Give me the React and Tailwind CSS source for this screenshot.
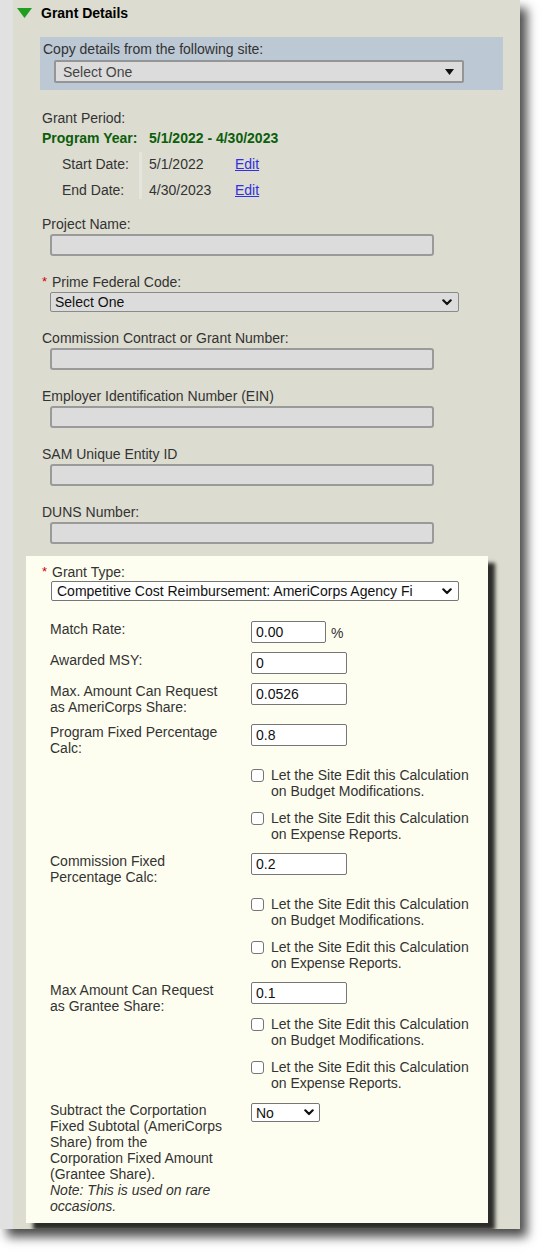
import React from "react";

const Chevron = () => (
  <svg width="10" height="7" viewBox="0 0 10 7" className="shrink-0">
    <path d="M1.3 1.3 L5 5 L8.7 1.3" fill="none" stroke="#111" strokeWidth="2.2" strokeLinecap="round" strokeLinejoin="round" />
  </svg>
);

const Req = () => <span className="inline-block w-[10px] text-[#d40000] text-[13px] leading-[16px]">*</span>;

function GrayInput() {
  return <div className="ml-[37px] mt-[2px] w-[384px] h-[22px] bg-[#dcdcdc] border-2 border-[#9a9a9a] rounded-[3px]" />;
}

function BeigeField({ label }) {
  return (
    <div className="mt-[18px]">
      <div className="pl-[29px] h-[16px] whitespace-nowrap">{label}</div>
      <GrayInput />
    </div>
  );
}

function TextBox({ value, w = "w-[96px]" }) {
  return (
    <div className={`${w} h-[22px] bg-white border border-[#767676] rounded-[2px] pl-[4px] flex items-center text-[#111] shrink-0`}>
      {value}
    </div>
  );
}

function Row({ mt, label, children }) {
  return (
    <div className={`flex ${mt}`}>
      <div className="w-[225px] pl-[24px] shrink-0 whitespace-nowrap">{label}</div>
      <div className="flex items-start">{children}</div>
    </div>
  );
}

function CheckRow({ mt, second }) {
  return (
    <div className={`flex ${mt} pl-[225px]`}>
      <div className="w-[13px] h-[13px] mt-[2px] border border-[#767676] rounded-[3px] bg-white shrink-0" />
      <div className="ml-[7px] whitespace-nowrap">
        Let the Site Edit this Calculation
        <br />
        {second}
      </div>
    </div>
  );
}

export default function App() {
  return (
    <div className="w-[543px] h-[1254px] bg-white overflow-hidden font-['Liberation_Sans',Arial,sans-serif] text-[14px] leading-[16px] text-[#333]">
      <div className="w-[520px] h-[1229px] bg-[#dcdcd0] border-l-[13px] border-[#e1e1e1] overflow-hidden shadow-[7px_8px_10px_rgba(0,0,0,0.7)]">
        {/* Header */}
        <div className="h-[26px] flex items-center">
          <svg width="15" height="10" viewBox="0 0 15 10" className="ml-[4px]">
            <polygon points="0,0 15,0 7.5,10" fill="#1f9e1f" />
          </svg>
          <span className="ml-[9px] font-bold text-black">Grant Details</span>
        </div>

        {/* Copy details box */}
        <div className="ml-[27px] mt-[11px] w-[463px] h-[53px] bg-[#bcc8d3] pt-[4px] pl-[3px]">
          <div className="h-[16px]">Copy details from the following site:</div>
          <div className="ml-[11px] mt-[3px] w-[410px] h-[23px] bg-[#dcdcdc] border-2 border-[#959595] rounded-[2px] flex items-center justify-between pl-[7px] pr-[8px] text-[#444]">
            <span>Select One</span>
            <svg width="9" height="6" viewBox="0 0 9 6">
              <polygon points="0,0 9,0 4.5,6" fill="#111" />
            </svg>
          </div>
        </div>

        {/* Grant period */}
        <div className="pl-[29px] mt-[20px] h-[16px]">Grant Period:</div>
        <div className="pl-[29px] mt-[4px] h-[16px] font-bold text-[#0b5e0b] flex">
          <span className="w-[107px]">Program Year:</span>
          <span>5/1/2022 - 4/30/2023</span>
        </div>
        <div className="flex mt-[5px]">
          <div className="pl-[49px] w-[126px]">
            <div className="h-[26px] flex items-center">Start Date:</div>
            <div className="h-[26px] flex items-center">End Date:</div>
          </div>
          <div className="w-[3px] mt-[1px] h-[47px] bg-[#e5e5dd]" />
          <div className="w-[93px] pl-[7px]">
            <div className="h-[26px] flex items-center">5/1/2022</div>
            <div className="h-[26px] flex items-center">4/30/2023</div>
          </div>
          <div>
            <div className="h-[26px] flex items-center text-[#3030e0] underline">Edit</div>
            <div className="h-[26px] flex items-center text-[#3030e0] underline">Edit</div>
          </div>
        </div>

        {/* Fields */}
        <div className="mt-[13px]">
          <div className="pl-[29px] h-[16px]">Project Name:</div>
          <GrayInput />
        </div>
        <div className="mt-[18px]">
          <div className="pl-[29px] h-[16px] flex">
            <Req />
            <span>Prime Federal Code:</span>
          </div>
          <div className="ml-[37px] mt-[2px] w-[409px] h-[20px] bg-[#dcdcdc] border-[1.5px] border-[#8a8a8a] rounded-[2px] flex items-center justify-between pl-[4px] pr-[6px] text-[#111]">
            <span>Select One</span>
            <Chevron />
          </div>
        </div>
        <BeigeField label="Commission Contract or Grant Number:" />
        <BeigeField label="Employer Identification Number (EIN)" />
        <BeigeField label="SAM Unique Entity ID" />
        <BeigeField label="DUNS Number:" />

        {/* Cream box */}
        <div className="ml-[13px] mt-[12px] w-[462px] bg-[#fefef0] pt-[8px] pb-[9px] shadow-[7px_7px_4px_rgba(0,0,0,0.8)]">
          <div className="pl-[16px] h-[16px] flex">
            <Req />
            <span>Grant Type:</span>
          </div>
          <div className="ml-[25px] mt-[1px] w-[408px] h-[20px] bg-white border border-[#767676] rounded-[2px] flex items-center justify-between pl-[5px] pr-[6px] text-[#111]">
            <span className="whitespace-nowrap">Competitive Cost Reimbursement: AmeriCorps Agency Fi</span>
            <Chevron />
          </div>

          <Row mt="mt-[20px]" label="Match Rate:">
            <TextBox value="0.00" w="w-[75px]" />
            <span className="ml-[5px] mt-[4px]">%</span>
          </Row>
          <Row mt="mt-[9px]" label="Awarded MSY:">
            <TextBox value="0" />
          </Row>
          <Row mt="mt-[9px]" label={<>Max. Amount Can Request<br />as AmeriCorps Share:</>}>
            <TextBox value="0.0526" />
          </Row>
          <Row mt="mt-[9px]" label={<>Program Fixed Percentage<br />Calc:</>}>
            <TextBox value="0.8" />
          </Row>
          <CheckRow mt="mt-[11px]" second="on Budget Modifications." />
          <CheckRow mt="mt-[11px]" second="on Expense Reports." />
          <Row mt="mt-[11px]" label={<>Commission Fixed<br />Percentage Calc:</>}>
            <TextBox value="0.2" />
          </Row>
          <CheckRow mt="mt-[11px]" second="on Budget Modifications." />
          <CheckRow mt="mt-[11px]" second="on Expense Reports." />
          <Row mt="mt-[11px]" label={<>Max Amount Can Request<br />as Grantee Share:</>}>
            <TextBox value="0.1" />
          </Row>
          <CheckRow mt="mt-[2px]" second="on Budget Modifications." />
          <CheckRow mt="mt-[11px]" second="on Expense Reports." />
          <Row
            mt="mt-[11px]"
            label={
              <>
                Subtract the Corportation
                <br />
                Fixed Subtotal (AmeriCorps
                <br />
                Share) from the
                <br />
                Corporation Fixed Amount
                <br />
                (Grantee Share).
                <br />
                <i>
                  Note: This is used on rare
                  <br />
                  occasions.
                </i>
              </>
            }
          >
            <div className="mt-[1px] w-[69px] h-[19px] bg-white border border-[#767676] rounded-[2px] flex items-center justify-between pl-[4px] pr-[5px] text-[#111]">
              <span>No</span>
              <Chevron />
            </div>
          </Row>
        </div>
      </div>
    </div>
  );
}
